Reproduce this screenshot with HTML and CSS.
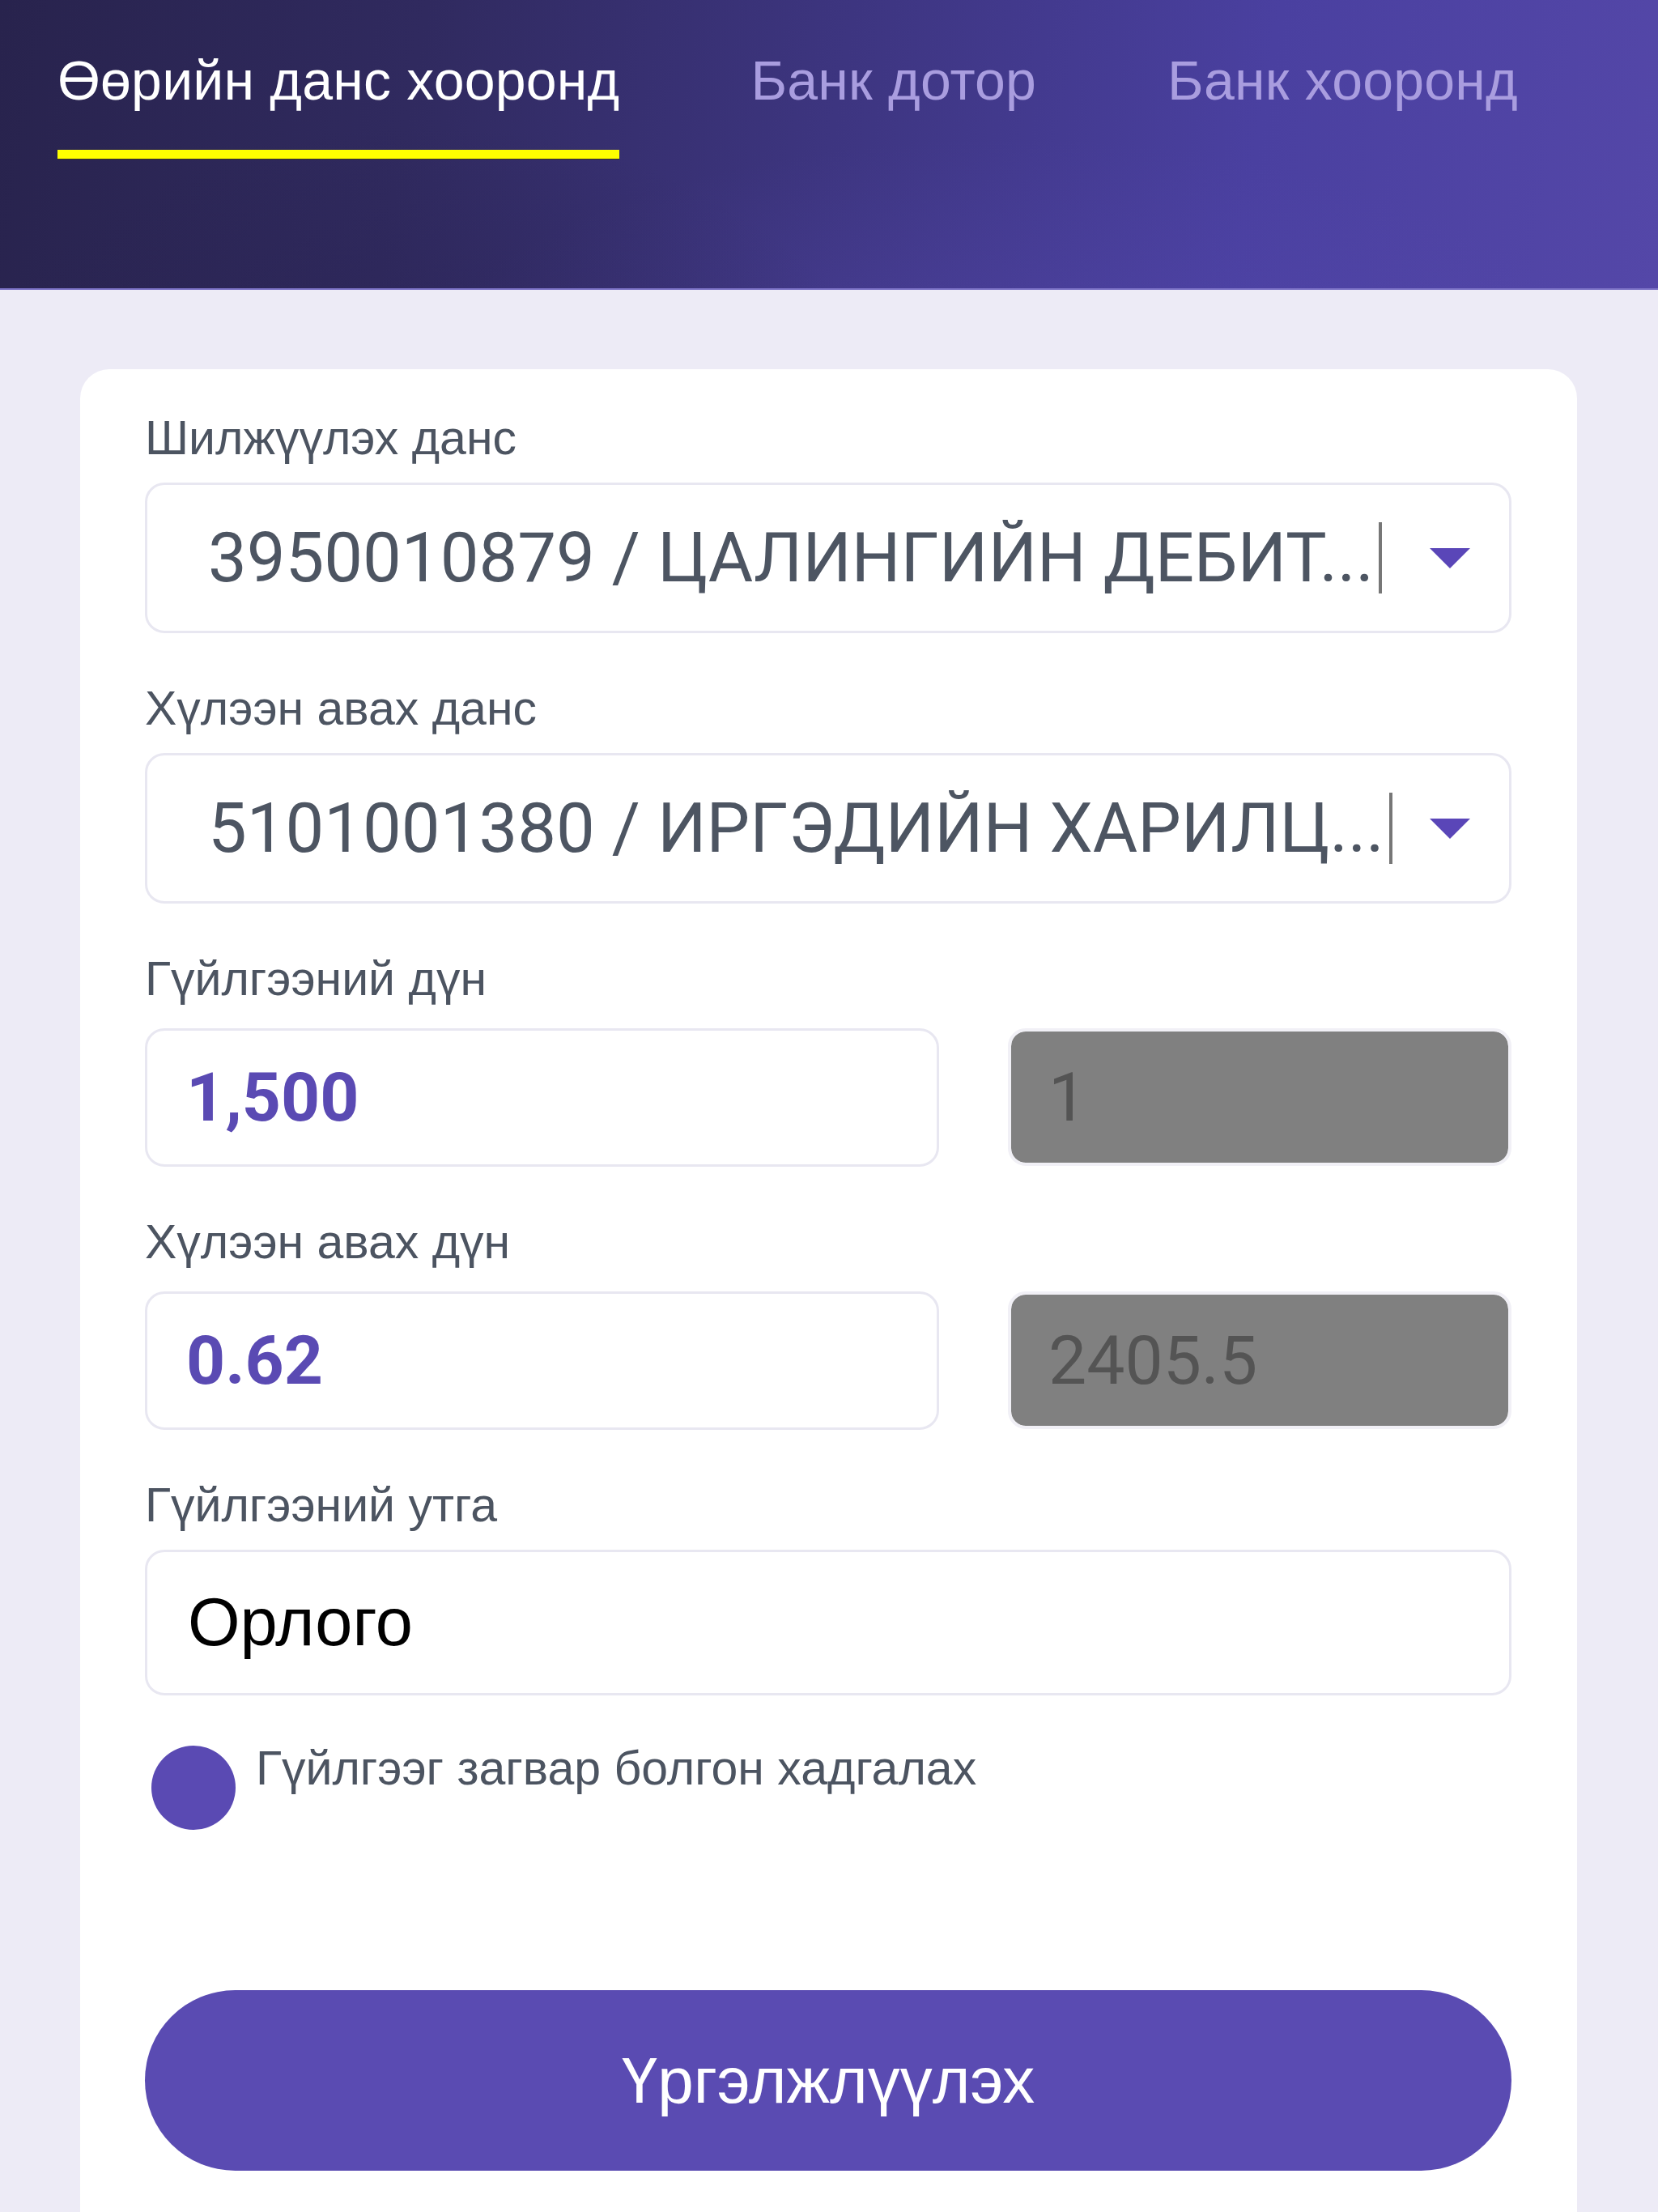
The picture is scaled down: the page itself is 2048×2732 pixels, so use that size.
FILE: index.html
```html
<!DOCTYPE html>
<html lang="mn">
<head>
<meta charset="utf-8">
<title>Шилжүүлэг</title>
<link rel="stylesheet" href="styles.css">
</head>
<body>
<header class="header">
  <nav class="tabs">
    <span class="tab tab-active">Өөрийн данс хооронд</span>
    <span class="tab">Банк дотор</span>
    <span class="tab">Банк хооронд</span>
  </nav>
</header>

<main class="card">
  <div class="field">
    <div class="label">Шилжүүлэх данс</div>
    <div class="select">
      <span class="select-text">3950010879 / ЦАЛИНГИЙН ДЕБИТ...</span>
      <span class="caret"></span>
      <span class="arrow"></span>
    </div>
  </div>

  <div class="field">
    <div class="label">Хүлээн авах данс</div>
    <div class="select">
      <span class="select-text">5101001380 / ИРГЭДИЙН ХАРИЛЦ...</span>
      <span class="caret"></span>
      <span class="arrow"></span>
    </div>
  </div>

  <div class="field">
    <div class="label">Гүйлгээний дүн</div>
    <div class="amount-row">
      <div class="input amount">1,500</div>
      <div class="input rate">1</div>
    </div>
  </div>

  <div class="field">
    <div class="label">Хүлээн авах дүн</div>
    <div class="amount-row">
      <div class="input amount">0.62</div>
      <div class="input rate">2405.5</div>
    </div>
  </div>

  <div class="field field-last">
    <div class="label">Гүйлгээний утга</div>
    <div class="input desc">Орлого</div>
  </div>

  <div class="check-row">
    <span class="check"></span>
    <span class="check-label">Гүйлгээг загвар болгон хадгалах</span>
  </div>

  <button class="btn">Үргэлжлүүлэх</button>
</main>
</body>
</html>
```

FILE: styles.css
```css
html, body {
  margin: 0;
  padding: 0;
}

body {
  width: 2048px;
  min-height: 2732px;
  background: #edebf6;
  font-family: "Liberation Sans", Arial, sans-serif;
  overflow: hidden;
}

.header {
  height: 358px;
  box-sizing: border-box;
  padding: 60px 0 0 71px;
  background:
    radial-gradient(ellipse 900px 700px at 520px 640px, rgba(38, 32, 76, 0.55) 0%, rgba(38, 32, 76, 0) 70%),
    radial-gradient(ellipse 1100px 500px at 1250px 520px, rgba(90, 76, 180, 0.35) 0%, rgba(90, 76, 180, 0) 70%),
    linear-gradient(100deg, #28234d 0%, #302a5f 25%, #3d3580 50%, #4a40a0 75%, #5447a8 100%);
  border-bottom: 2px solid #7c72c6;
}

.tabs {
  display: flex;
  gap: 162px;
}

.tab {
  font-size: 68px;
  line-height: 78px;
  color: #a99ddf;
  padding-bottom: 47px;
  border-bottom: 11px solid transparent;
  white-space: nowrap;
  letter-spacing: 0.2px;
}

.tab-active {
  color: #ffffff;
  border-bottom-color: #ffff00;
  box-shadow: 0 1px 0 #3b3520;
}

.card {
  display: block;
  margin: 98px 0 0 99px;
  width: 1849px;
  min-height: 2400px;
  box-sizing: border-box;
  padding: 52px 81px 0 80px;
  background: #ffffff;
  border-radius: 36px 36px 0 0;
}

.field {
  margin-bottom: 60px;
}

.field-last {
  margin-bottom: 62px;
}

.label {
  font-size: 59px;
  line-height: 67px;
  color: #4c5461;
  margin-bottom: 21px;
}

.select {
  display: flex;
  align-items: center;
  height: 186px;
  box-sizing: border-box;
  border: 3px solid #e8e7f1;
  border-radius: 24px;
  padding: 0 48px 0 75px;
}

.select-text {
  font-family: Roboto, "Liberation Sans", sans-serif;
  font-size: 85px;
  color: #4d5562;
  white-space: nowrap;
  flex: 0 1 auto;
}

.caret {
  width: 4px;
  height: 88px;
  background: #777777;
  margin-left: 6px;
  flex: 0 0 auto;
}

.arrow {
  margin-left: auto;
  width: 0;
  height: 0;
  border-left: 25px solid transparent;
  border-right: 25px solid transparent;
  border-top: 25px solid #5a46b8;
}

.amount-row {
  display: flex;
  gap: 85px;
  padding-top: 6px;
}

.input {
  display: flex;
  align-items: center;
  box-sizing: border-box;
  border: 3px solid #e8e7f1;
  border-radius: 24px;
  font-family: Roboto, "Liberation Sans", sans-serif;
  font-size: 84px;
}

.amount {
  width: 981px;
  height: 171px;
  padding-left: 48px;
  font-weight: 700;
  color: #5a4ab3;
}

.rate {
  width: 622px;
  height: 170px;
  padding-left: 46px;
  background: #808080;
  background-clip: padding-box;
  border: 4px solid #f1f0f6;
  color: #545454;
  border-radius: 22px;
}

.desc {
  height: 180px;
  padding-left: 50px;
  font-family: "Liberation Sans", Arial, sans-serif;
  font-size: 83px;
  color: #000000;
}

.check-row {
  display: flex;
  align-items: flex-start;
  gap: 25px;
  padding-left: 8px;
}

.check {
  width: 104px;
  height: 104px;
  border-radius: 50%;
  background: #5a4ab3;
  flex: 0 0 auto;
}

.check-label {
  font-size: 59px;
  line-height: 66px;
  color: #4c5461;
  margin-top: -5px;
}

.btn {
  display: block;
  margin-top: 198px;
  width: 100%;
  height: 223px;
  border: none;
  border-radius: 112px;
  background: #5a4bb2;
  color: #ffffff;
  font-family: "Liberation Sans", Arial, sans-serif;
  font-size: 80px;
  padding: 0;
}
```
